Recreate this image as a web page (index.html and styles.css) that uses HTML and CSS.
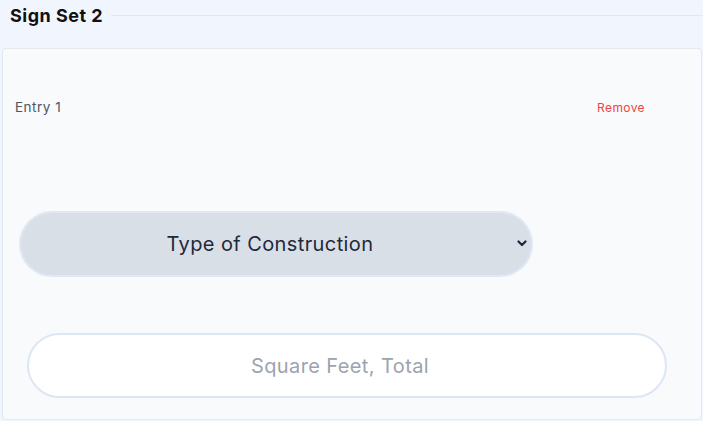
FILE: index.html
```html
<!DOCTYPE html>
<html lang="en">
<head>
<meta charset="utf-8">
<title>Sign Set 2</title>
<link rel="stylesheet" href="styles.css">
</head>
<body>
<section class="set">
  <header class="set-head">
    <h2 class="set-title">Sign Set 2</h2>
    <span class="set-rule"></span>
  </header>
  <div class="entry-card">
    <div class="entry-row">
      <span class="entry-label">Entry 1</span>
      <button class="remove-btn" type="button">Remove</button>
    </div>
    <div class="select-wrap">
      <select class="pill-select">
        <option>Type of Construction</option>
      </select>
      <svg class="chev" width="10" height="7" viewBox="0 0 10 7" aria-hidden="true"><path d="M1.5 1.5 L5 5 L8.5 1.5" fill="none" stroke="#1e293b" stroke-width="2.2" stroke-linecap="round" stroke-linejoin="round"/></svg>
    </div>
    <input class="pill-input" type="text" placeholder="Square Feet, Total">
  </div>
</section>
</body>
</html>
```
FILE: styles.css
```css
* { box-sizing: border-box; }
html, body { margin: 0; }
body {
  background: #f0f5fe;
  font-family: "Inter", "Noto Sans", sans-serif;
  width: 703px;
  height: 421px;
  overflow: hidden;
}
.set { display: flex; flex-direction: column; }
.set-head {
  display: flex;
  align-items: center;
  height: 32px;
  padding-left: 10px;
  padding-bottom: 2px;
}
.set-title {
  margin: 0;
  font-size: 18px;
  font-weight: 700;
  color: #111111;
  letter-spacing: 0.5px;
}
.set-rule {
  flex: 1;
  height: 1px;
  background: #e2e6ee;
  margin-left: 8px;
}
.entry-card {
  margin: 16px 1px 0 2px;
  height: 372px;
  background: #f8fafc;
  border: 1px solid #e3e7ee;
  border-radius: 4px;
  padding: 48px 0 0 0;
  display: flex;
  flex-direction: column;
}
.entry-row {
  display: flex;
  justify-content: space-between;
  align-items: center;
  height: 20px;
  padding-left: 12px;
  padding-right: 56px;
}
.entry-label { font-size: 13.5px; color: #4b5563; letter-spacing: 0.5px; }
.remove-btn {
  border: 0;
  background: none;
  padding: 0;
  font-family: inherit;
  font-size: 12px;
  letter-spacing: 0.4px;
  color: #ef4444;
}
.select-wrap {
  position: relative;
  margin: 94px 0 0 16px;
  width: 514px;
  height: 66px;
}
.pill-select {
  appearance: none;
  -webkit-appearance: none;
  width: 100%;
  height: 100%;
  border: 2px solid #e1e8f4;
  border-radius: 33px;
  background: #d9dfe7;
  color: #1e293b;
  font-family: inherit;
  font-size: 20px;
  letter-spacing: 0.4px;
  text-align: center;
  text-align-last: center;
  padding: 0 32px 0 20px;
}
.chev { position: absolute; right: 6px; top: 29px; }
.pill-input {
  margin: 56px 0 0 24px;
  width: 640px;
  height: 65px;
  border: 2px solid #dde6f5;
  border-radius: 33px;
  background: #ffffff;
  font-family: inherit;
  font-size: 20px;
  letter-spacing: 0.4px;
  text-align: center;
  color: #1e293b;
  padding: 0 34px 0 20px;
}
.pill-input::placeholder { color: #9ca3af; }
```
